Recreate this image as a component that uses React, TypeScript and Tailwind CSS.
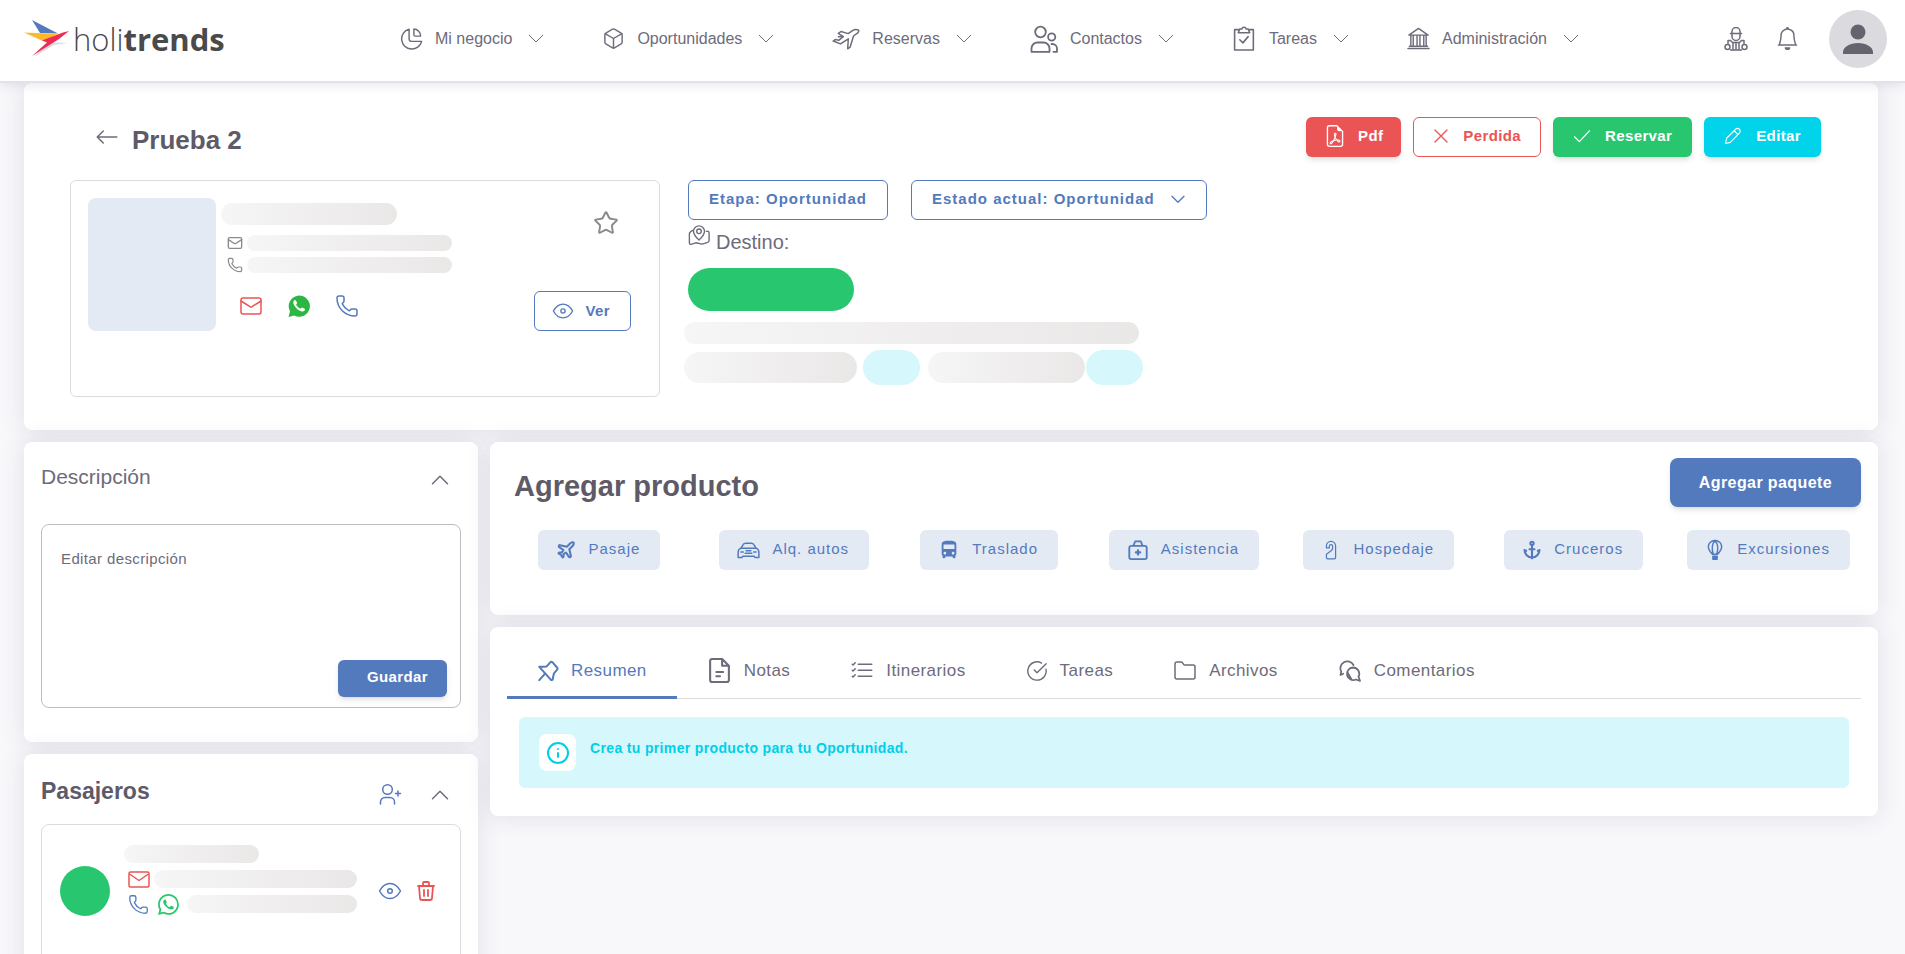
import type { ReactNode } from "react";
import { Anchor, Box, CircleCheckBig, Folder, Info, Mail, Phone, Plane, Star } from "lucide-react";
import { BsArrowLeft, BsBell, BsFileEarmarkPdf, BsListCheck, BsWhatsapp } from "react-icons/bs";
import { MdDirectionsBus } from "react-icons/md";
import { TbTrash } from "react-icons/tb";

type IconProps = { className?: string; children?: ReactNode };

function Svg({ className, children }: IconProps) {
  return (
    <svg viewBox="0 0 24 24" fill="none" stroke="currentColor" strokeWidth="1.5" strokeLinecap="round" strokeLinejoin="round" className={className} aria-hidden="true">
      {children}
    </svg>
  );
}

const PieIcon = () => (
  <Svg className="h-[23px] w-[23px]">
    <path d="M9.5 2.2A10.600 10.600 0 1 0 22.600 15H12a2.500 2.500 0 0 1-2.500-2.500z" />
    <path d="M14.500 3v5a1.500 1.500 0 0 0 1.500 1.500h5.500C21.500 5.500 18 2 14.500 2z" />
  </Svg>
);

const JetIcon = () => (
  <svg viewBox="0 0 28 24" fill="none" stroke="currentColor" strokeWidth="1.5" strokeLinecap="round" strokeLinejoin="round" className="h-6 w-7" aria-hidden="true">
    <path d="M26.5 3.2c-1.5-1-4-.9-6 .4l-4.3 3L9 4.500 6.300 6.300l5 3.400-4.600 3.600-3.500-.7-2 1.400 7.300 2.900 7.800-5.100-.6 10 2.400-1.600 3.400-11.200 4.200-3.100c.9-.8 1.200-1.900.8-2.700z" />
    <path d="M11 9.500 6.500 9.800" />
  </svg>
);

const PeopleIcon = () => (
  <svg viewBox="0 0 28 28" fill="none" stroke="currentColor" strokeWidth="1.8" strokeLinecap="round" strokeLinejoin="round" className="h-7 w-7" aria-hidden="true">
    <circle cx="10.500" cy="7" r="5.300" />
    <circle cx="21.700" cy="12" r="3.600" />
    <path d="M1.500 26.800v-3.300a6 6 0 0 1 6-6h6a6 6 0 0 1 6 6v3.300zM21.500 19h1a4.500 4.500 0 0 1 4.500 4.500v3.300h-3.500" />
  </svg>
);

const ClipboardIcon = () => (
  <Svg className="h-[25px] w-[25px]">
    <path d="M6 3.500H2.500V23h18V3.500H17M7.500 2.800h1.800a2.300 2.300 0 0 1 4.400 0h1.800L17 6.500H6zM7.500 13.200l3 3 5-6" />
  </Svg>
);

const BankIcon = () => (
  <Svg className="h-[23px] w-[23px]">
    <path d="M2 8.500 12 1.500l10 7zM1 22.500h22M2.500 20h19M4 8.500V20M6.500 8.500V20M10.500 8.500V20M13.500 8.500V20M17.500 8.500V20M20 8.500V20" />
  </Svg>
);

const AgentIcon = () => (
  <Svg className="h-6 w-6">
    <path d="M6.500 6.500h11M8 6.500V4.500a4 4 0 0 1 8 0v2M8 6.500v3a4 4 0 0 0 8 0v-3M4 13.500h2.500l2 2h7l2-2H20M4 13.500v3M20 13.500v3M9 15.500V23M12 15.500V23M15 15.500V23M6.500 23h11" />
    <circle cx="3.500" cy="20" r="2.500" />
    <circle cx="20.500" cy="20" r="2.500" />
  </Svg>
);

const EyeIcon = ({ className }: IconProps) => (
  <Svg className={className}>
    <path d="M1.500 12C4 7.500 7 4.500 12 4.500s8 3 10.500 7.500c-2.500 4.500-5.500 7.500-10.500 7.500S4 16.500 1.500 12z" />
    <circle cx="12" cy="12" r="2.300" />
  </Svg>
);

const CarIcon = () => (
  <svg viewBox="0 0 24 18" fill="none" stroke="currentColor" strokeWidth="1.6" strokeLinecap="round" strokeLinejoin="round" className="h-[17px] w-[23px]" aria-hidden="true">
    <path d="M4 6.500 6.500 2.500C7 1.600 8 1.200 9 1.200h6c1 0 2 .4 2.500 1.300L20 6.500c2 .8 3 2.200 3 4.500v5.500h-4l-1-1.500H6L5 16.500H1V11c0-2.300 1-3.700 3-4.500zM4 6.500h16M4 10.500h2.500M17.500 10.500H20M8.500 12h7M9.500 9.300h5" />
  </svg>
);

const MedkitIcon = () => (
  <Svg className="h-[22px] w-[22px]">
    <path d="M4.500 7.500h15a2 2 0 0 1 2 2V20a2 2 0 0 1-2 2h-15a2 2 0 0 1-2-2V9.500a2 2 0 0 1 2-2zM7 7.500l1.500-4a1.500 1.500 0 0 1 1.500-1h4a1.500 1.500 0 0 1 1.500 1l1.500 4" strokeWidth="2" />
    <path d="M12 12.500v4.500M9.700 14.700h4.600" strokeWidth="2.5" />
  </Svg>
);

const NoteIcon = () => (
  <Svg className="h-[25px] w-[25px] stroke-2">
    <path d="M5 1h9.500L21 7.500V21a2 2 0 0 1-2 2H5a2 2 0 0 1-2-2V3a2 2 0 0 1 2-2zM14.500 1.500v6h6M9 13.500h6.500M9 17.500h3.500" />
  </Svg>
);

const ChatIcon = () => (
  <Svg className="h-6 w-6 stroke-[1.8]">
    <path d="M5.200 14.800 2.500 16l.7-3.200A7 7 0 1 1 15.500 6" />
    <path d="M15 8.500a6.300 6.300 0 0 1 5.500 9.300l1.500 4-4.100-1.300A6.300 6.300 0 1 1 15 8.500zM9.500 13.500l4 7" />
  </Svg>
);

const PinIcon = () => (
  <Svg className="h-[22px] w-[22px] stroke-[2.2]">
    <path d="M2.500 7.500 10.500 7l4.500-5 2 .5 5.500 6.500-.5 1.500-3.500 4L17 21.500l-1.500.5zM9 14.500l-6.500 7.500" />
  </Svg>
);

const HangerIcon = () => (
  <Svg className="h-[22px] w-5">
    <path d="M6.500 9.500V7a5.500 5.500 0 0 1 11 0v14a1.500 1.500 0 0 1-1.500 1.500H8A1.500 1.500 0 0 1 6.500 21v-4l6-4.500A4 4 0 0 0 14 9V7.500a2 2 0 0 0-4 0v2z" />
  </Svg>
);

const BalloonIcon = () => (
  <Svg className="h-6 w-5 stroke-[1.8]">
    <path d="M9 17C6 14 4 11 4 8a8 7.500 0 0 1 16 0c0 3-2 6-5 9zM10 17C8 11 8 5 12 .8M14 17c2-6 2-12-2-16.200" />
    <path d="M9.500 19.500h5V23h-5z" fill="currentColor" />
  </Svg>
);

const MapIcon = () => (
  <Svg className="h-[22px] w-[22px]">
    <path d="M12 17.500C8 14 6 11.500 6 8a6 6 0 0 1 12 0c0 3.500-2 6-6 9.500z" />
    <circle cx="12" cy="8" r="2.500" />
    <path d="M5 7c-2 1-3.500 2-3.500 4v9.500c0 1.500 1 2 2.500 1.500l4.500-1.500 7 1.500 6-2c1-.4 1.500-1 1.500-2V9.500c0-1.500-1.500-2-3-1.500" />
  </Svg>
);

const UserAddIcon = () => (
  <Svg className="h-6 w-6">
    <circle cx="9.500" cy="7.500" r="4.800" />
    <path d="M2.500 22v-2a4.500 4.500 0 0 1 4.500-4.500h5a4.500 4.500 0 0 1 4.500 4.500v2M20 9v5M17.500 11.500h5" />
  </Svg>
);

const WhatsappBadge = () => (
  <svg viewBox="0 0 24 24" className="h-6 w-6" aria-hidden="true">
    <path d="M1.500 23 3 17.300A10.600 10.600 0 1 1 7.200 21.500z" fill="#2cb742" />
    <path d="M8.600 6.200c-.5-.4-1.600 0-2 .9-.9 2 .2 4.400 2.600 6.900s5.400 4 7.300 3.300c1.300-.5 1.800-1.600 1.400-2.300l-2.600-1.500c-.8-.3-1.200 1.200-2 1.100-1.500-.4-3.700-2.500-4.100-3.800-.1-.7 1.100-1.200.9-2z" fill="#fff" />
  </svg>
);

const ChevronUp = () => (
  <Svg className="h-[18px] w-[18px]">
    <path d="M2 17 12 7l10 10" strokeWidth="2" />
  </Svg>
);

const navItems = [
  { name: "Mi negocio", icon: <PieIcon /> },
  { name: "Oportunidades", icon: <Box className="h-[23px] w-[23px]" strokeWidth={1.5} /> },
  { name: "Reservas", icon: <JetIcon /> },
  { name: "Contactos", icon: <PeopleIcon /> },
  { name: "Tareas", icon: <ClipboardIcon /> },
  { name: "Administración", icon: <BankIcon /> },
];

const products = [
  { name: "Pasaje", icon: <Plane className="h-5 w-5" strokeWidth={2.5} /> },
  { name: "Alq. autos", icon: <CarIcon /> },
  { name: "Traslado", icon: <MdDirectionsBus className="h-[22px] w-[22px]" /> },
  { name: "Asistencia", icon: <MedkitIcon /> },
  { name: "Hospedaje", icon: <HangerIcon /> },
  { name: "Cruceros", icon: <Anchor className="h-5 w-5" strokeWidth={2.5} /> },
  { name: "Excursiones", icon: <BalloonIcon /> },
];

const tabs = [
  { name: "Resumen", icon: <PinIcon />, active: true },
  { name: "Notas", icon: <NoteIcon /> },
  { name: "Itinerarios", icon: <BsListCheck className="h-6 w-6" /> },
  { name: "Tareas", icon: <CircleCheckBig className="h-[22px] w-[22px]" strokeWidth={1.5} /> },
  { name: "Archivos", icon: <Folder className="h-6 w-6" strokeWidth={1.5} /> },
  { name: "Comentarios", icon: <ChatIcon /> },
];

const cardClass = "rounded-lg bg-white shadow-[0_0_24px_rgba(60,50,95,0.13)]";
const barClass = "rounded-full bg-gradient-to-r from-[#f6f6f6] via-[#f0eeef] to-[#eae8e7]";
const actionClass = "flex h-10 items-center rounded-md pb-[2px] text-[15px] font-bold tracking-wide";

function Header() {
  return (
    <header className="relative z-10 flex h-[83px] shrink-0 items-center border-b-2 border-[#e3e2ea] bg-white pr-[18px] pb-1 pl-6 text-[#6e6b7b] shadow-[0_2px_10px_rgba(60,50,95,0.12)]">
      <a href="#" className="flex w-[202px] items-center text-[31px] leading-9 text-[#4a4a4a]">
        <svg viewBox="0 0 46 38" className="h-[38px] w-[46px]" aria-hidden="true">
          <path d="M44 23 30 25 10 37 24 22z" fill="#dcdcdc" />
          <path d="M8 0 34 13.500 16 13z" fill="#537abd" />
          <path d="M0 12.500 34 14 19 21z" fill="#fdb928" />
          <path d="M45 11 39 12.500 18 20.500 23 22.500 8 36 35 19z" fill="#ee2b55" />
        </svg>
        <span className="ml-[3px] font-['Open_Sans','Noto_Sans',sans-serif] font-light">
          holi<b className="font-bold">trends</b>
        </span>
      </a>
      <nav className="ml-[174px] flex items-center gap-[58px]">
        {navItems.map((item) => (
          <button key={item.name} className="flex items-center text-[16px]">
            {item.icon}
            <span className="ml-3">{item.name}</span>
            <svg viewBox="0 0 16 10" fill="none" stroke="currentColor" strokeWidth="1" className="ml-4 h-[10px] w-4" aria-hidden="true">
              <path d="M1 1l7 7 7-7" />
            </svg>
          </button>
        ))}
      </nav>
      <div className="ml-auto flex items-center">
        <button aria-label="Soporte"><AgentIcon /></button>
        <button aria-label="Notificaciones" className="ml-7"><BsBell className="h-[23px] w-[23px]" /></button>
        <button aria-label="Mi cuenta" className="ml-[30px] flex h-[58px] w-[58px] items-center justify-center rounded-full bg-[#dbdade]">
          <svg viewBox="0 0 30 30" className="h-[30px] w-[30px]" fill="#66636f" aria-hidden="true">
            <circle cx="15" cy="8" r="7.500" />
            <path d="M0 30v-2c0-5 7-9 15-9s15 4 15 9v2z" />
          </svg>
        </button>
      </div>
    </header>
  );
}

function Opportunity() {
  return (
    <section className={`${cardClass} h-[347px] pt-[34px] pr-[57px] pl-[46px]`}>
      <div className="flex items-start">
        <a href="#" aria-label="Volver" className="mt-2 ml-[25px]"><BsArrowLeft className="h-6 w-6" /></a>
        <h1 className="mt-[7px] ml-[13px] text-[26px] leading-8 font-bold text-[#5e5a68]">Prueba 2</h1>
        <div className="ml-auto flex gap-3">
          <button className={`${actionClass} bg-[#ea5455] px-[18px] text-white shadow-md`}>
            <BsFileEarmarkPdf className="mr-3 h-[22px] w-[22px]" />Pdf
          </button>
          <button className={`${actionClass} border border-[#ea5455] px-[19px] text-[#ea5455]`}>
            <Svg className="mr-[14px] h-4 w-4"><path d="M3 3l18 18M21 3 3 21" strokeWidth="2" /></Svg>Perdida
          </button>
          <button className={`${actionClass} bg-[#28c76f] px-5 text-white shadow-md`}>
            <Svg className="mr-[14px] h-[18px] w-[18px]"><path d="M2 13l6.500 6.500L22 5" /></Svg>Reservar
          </button>
          <button className={`${actionClass} bg-[#00d3ea] px-5 text-white shadow-md`}>
            <Svg className="mr-[14px] h-[18px] w-[18px]"><path d="M2 22l1.500-7L15.500 3a3.500 3.500 0 0 1 5 5L8.500 20.500zM13.500 5l5 5" /></Svg>Editar
          </button>
        </div>
      </div>

      <div className="mt-[23px] flex items-start">
        <div className="flex h-[217px] w-[590px] items-start rounded-md border border-[#dcdcdc] pt-[17px] pr-7 pl-[17px]">
          <div className="h-[133px] w-32 rounded-lg bg-[#e3eaf4]" />
          <div className="mt-[5px] ml-[5px] text-[#8a8a8a]">
            <div className={`${barClass} h-[22px] w-44`} />
            <div className="mt-[10px] ml-[6px] flex items-center gap-1">
              <Mail className="h-4 w-4" strokeWidth={2} /><div className={`${barClass} h-4 w-[205px]`} />
            </div>
            <div className="mt-[6px] ml-[6px] flex items-center gap-1">
              <Phone className="h-4 w-4" strokeWidth={1.8} /><div className={`${barClass} h-4 w-[205px]`} />
            </div>
            <div className="mt-[21px] ml-[18px] flex items-center gap-6">
              <a href="#" aria-label="Enviar correo"><Mail className="h-6 w-6 text-[#ea5455]" strokeWidth={1.5} /></a>
              <a href="#" aria-label="WhatsApp"><WhatsappBadge /></a>
              <a href="#" aria-label="Llamar"><Phone className="h-6 w-6 text-[#537abd]" strokeWidth={1.5} /></a>
            </div>
          </div>
          <div className="ml-auto flex flex-col items-end">
            <button aria-label="Favorito" className="mt-3 mr-3 text-[#8a8a8a]"><Star className="h-[26px] w-[26px]" strokeWidth={1.8} /></button>
            <button className="mt-[55px] flex h-10 items-center rounded-md border border-[#537abd] pr-5 pl-[17px] text-[15px] font-bold tracking-wide text-[#537abd]">
              <EyeIcon className="mr-3 h-[22px] w-[22px]" />Ver
            </button>
          </div>
        </div>

        <div className="ml-6">
          <div className="ml-[4px] flex gap-[23px] text-[15px] font-bold tracking-[1px] text-[#537abd]">
            <button className="h-10 rounded-md border border-[#537abd] px-5 pb-[2px]">Etapa: Oportunidad</button>
            <button className="flex h-10 items-center rounded-md border border-[#537abd] px-5 pb-[2px]">
              Estado actual: Oportunidad
              <Svg className="ml-[15px] h-4 w-4"><path d="M3 8l9 9 9-9" strokeWidth="2" /></Svg>
            </button>
          </div>
          <p className="mt-1 ml-[4px] flex items-start text-[20px] leading-7"><MapIcon /><span className="mt-1 ml-[6px]">Destino:</span></p>
          <div className="mt-3 ml-[4px] h-[43px] w-[166px] rounded-full bg-[#28c76f]" />
          <div className={`${barClass} mt-[11px] h-[22px] w-[455px]`} />
          <div className="mt-[6px] flex items-center">
            <div className={`${barClass} h-[31px] w-[173px]`} />
            <div className="ml-[6px] h-[35px] w-[57px] rounded-full bg-[#d6f7fc]" />
            <div className={`${barClass} ml-2 h-[31px] w-[157px]`} />
            <div className="ml-[1px] h-[35px] w-[57px] rounded-full bg-[#d6f7fc]" />
          </div>
        </div>
      </div>
    </section>
  );
}

function Sidebar() {
  return (
    <aside className="flex w-[454px] shrink-0 flex-col gap-3">
      <section className={`${cardClass} h-[300px] px-[17px] pt-[21px]`}>
        <div className="flex items-center justify-between pr-3">
          <h2 className="text-[21px] leading-7">Descripción</h2>
          <button aria-label="Contraer descripción" className="mt-[6px]"><ChevronUp /></button>
        </div>
        <form className="mt-[33px] flex h-[184px] flex-col rounded-lg border border-[#bdbdbd] pt-[22px] pr-[13px] pb-[10px] pl-[19px]">
          <textarea aria-label="Editar descripción" placeholder="Editar descripción" className="w-full flex-1 resize-none text-[15px] leading-6 tracking-wide outline-none placeholder:text-[#6e6b7b]" />
          <button type="button" className="h-[37px] self-end rounded-md bg-[#537abd] pr-[19px] pl-[29px] pb-[2px] text-[15px] font-bold tracking-wide text-white shadow-md">
            Guardar
          </button>
        </form>
      </section>

      <section className={`${cardClass} h-[300px] px-[17px] pt-[21px]`}>
        <div className="flex items-center pr-3">
          <h2 className="text-[23px] leading-8 font-bold text-[#5e5a68]">Pasajeros</h2>
          <button aria-label="Agregar pasajero" className="mt-[6px] ml-auto text-[#537abd]"><UserAddIcon /></button>
          <button aria-label="Contraer pasajeros" className="mt-2 ml-[29px]"><ChevronUp /></button>
        </div>
        <div className="mt-[17px] flex h-[220px] items-start rounded-lg border border-[#dcdcdc] pt-5 pr-[22px] pl-[18px]">
          <div className="mt-[21px] h-[50px] w-[50px] rounded-full bg-[#28c76f]" />
          <div className="ml-[14px]">
            <div className={`${barClass} h-[18px] w-[135px]`} />
            <div className="mt-[7px] ml-1 flex h-[18px] items-center">
              <svg viewBox="0 0 22 17" fill="none" stroke="currentColor" strokeWidth="1.5" strokeLinejoin="round" className="mr-1 h-[17px] w-[22px] text-[#ea5455]" aria-hidden="true">
                <rect x="1" y="1" width="20" height="15" rx="1.5" />
                <path d="M1.500 3 11 9.500 20.500 3" />
              </svg>
              <div className={`${barClass} h-[18px] w-[203px]`} />
            </div>
            <div className="mt-[7px] ml-1 flex h-[18px] items-center">
              <Phone className="h-[21px] w-[21px] text-[#537abd]" strokeWidth={1.5} />
              <BsWhatsapp className="ml-[9px] h-[21px] w-[21px] text-[#28c76f]" />
              <div className={`${barClass} ml-2 h-[18px] w-[170px]`} />
            </div>
          </div>
          <button aria-label="Ver pasajero" className="mt-[34px] ml-auto text-[#537abd]"><EyeIcon className="h-6 w-6" /></button>
          <button aria-label="Eliminar pasajero" className="mt-[34px] ml-3 text-[#ea5455]"><TbTrash className="h-6 w-6" strokeWidth={1.8} /></button>
        </div>
      </section>
    </aside>
  );
}

export default function App() {
  return (
    <div className="flex h-screen flex-col overflow-hidden bg-[#f8f8fb] font-['Liberation_Sans',Arial,sans-serif] text-[#6e6b7b]">
      <Header />
      <main className="flex flex-col gap-3 pr-[27px] pl-6">
        <Opportunity />
        <div className="flex items-start gap-3">
          <Sidebar />
          <div className="flex min-w-0 flex-1 flex-col gap-3">
            <section className={`${cardClass} h-[173px]`}>
              <div className="flex items-start pt-4 pr-[17px] pl-6">
                <h2 className="mt-[10px] text-[29px] leading-9 font-bold text-[#5e5a68]">Agregar producto</h2>
                <button className="ml-auto h-[49px] rounded-lg bg-[#537abd] px-[29px] text-[16px] font-bold tracking-wide text-white shadow-md">
                  Agregar paquete
                </button>
              </div>
              <div className="mt-[23px] grid grid-cols-7 px-3">
                {products.map((product) => (
                  <button key={product.name} className="flex h-10 items-center justify-self-center rounded-md bg-[#e3eaf4] pr-5 pl-[18px] text-[15px] tracking-[1px] text-[#537abd]">
                    {product.icon}
                    <span className="ml-3 pb-[2px]">{product.name}</span>
                  </button>
                ))}
              </div>
            </section>

            <section className={`${cardClass} h-[189px] px-[17px] pt-4`}>
              <div role="tablist" className="flex border-b border-[#dcdcdc]">
                {tabs.map((tab) => (
                  <button
                    key={tab.name}
                    role="tab"
                    aria-selected={!!tab.active}
                    className={`-mb-[1px] flex h-14 items-center border-b-[3px] px-[30px] pt-[2px] text-[17px] tracking-wide ${tab.active ? "border-[#537abd] text-[#537abd]" : "border-transparent"}`}
                  >
                    {tab.icon}
                    <span className="ml-3">{tab.name}</span>
                  </button>
                ))}
              </div>
              <div className="mx-3 mt-[18px] flex h-[71px] items-start rounded-md bg-[#d6f7fc] pt-[17px] pl-5">
                <div className="flex h-[37px] w-[37px] items-center justify-center rounded-lg bg-white text-[#00cfe8]">
                  <Info className="h-6 w-6" strokeWidth={2} />
                </div>
                <p className="mt-1 ml-[14px] text-[14px] leading-5 font-bold tracking-wide text-[#00cfe8]">Crea tu primer producto para tu Oportunidad.</p>
              </div>
            </section>
          </div>
        </div>
      </main>
    </div>
  );
}
